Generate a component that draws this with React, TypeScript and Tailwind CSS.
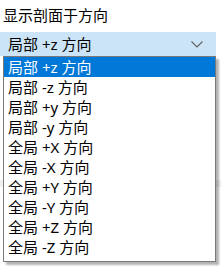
const items = [
  "局部 +z 方向",
  "局部 -z 方向",
  "局部 +y 方向",
  "局部 -y 方向",
  "全局 +X 方向",
  "全局 -X 方向",
  "全局 +Y 方向",
  "全局 -Y 方向",
  "全局 +Z 方向",
  "全局 -Z 方向",
];

const font = { fontFamily: '"Noto Sans", "Noto Sans CJK SC", sans-serif' };

function Chevron() {
  return (
    <svg width="12" height="7" viewBox="0 0 12 7" fill="none" className="text-[#606060]">
      <path d="M0.5 0.5 L6 6 L11.5 0.5" stroke="currentColor" strokeWidth="1.1" />
    </svg>
  );
}

export default function App() {
  return (
    <div
      className="relative w-[221px] h-[268px] overflow-hidden bg-white text-[15px] text-black"
      style={font}
    >
      <div className="h-[32px] pl-[3px] pt-[4px] leading-[22px]">显示剖面于方向</div>
      <div className="flex h-[24px] w-[216px] items-center justify-between bg-[#cce4f7] pl-[8px] pr-[13px] leading-[22px]">
        <span>局部 +z 方向</span>
        <Chevron />
      </div>
      <div className="mt-[124px] h-[7px] bg-[#f0f0f0]" />

      <div className="absolute left-[3px] top-[56px] w-[213px] border border-[#7a7a7a] bg-white pb-[4px] shadow-[3px_3px_2px_rgba(0,0,0,0.3)]">
        {items.map((label, i) => (
          <div
            key={label}
            className={`flex h-[20px] items-center pl-[4px] leading-[20px] ${
              i === 0 ? "bg-[#0078d7] text-white" : ""
            }`}
          >
            {label}
          </div>
        ))}
      </div>
    </div>
  );
}
